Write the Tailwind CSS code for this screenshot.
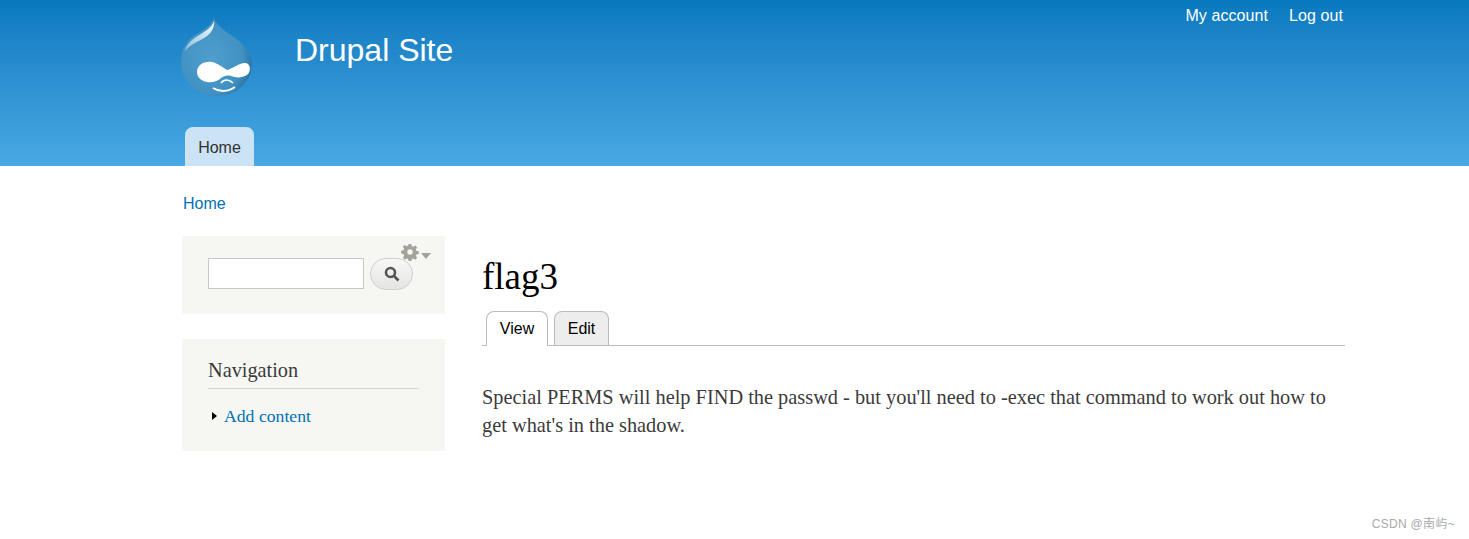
<!DOCTYPE html>
<html lang="en">
<head>
  <meta charset="UTF-8">
  <title>flag3 | Drupal Site</title>
  <script src="https://cdn.jsdelivr.net/npm/@tailwindcss/browser@4"></script>
</head>
<body class="relative min-h-[539px] bg-white font-['Liberation_Sans',sans-serif] text-[#3b3b3b] overflow-hidden">
  <header class="h-[166px] bg-gradient-to-b from-[#0779bf] to-[#48a9e4] flex flex-col">
    <div class="h-[127px] w-[1163px] ml-[182px] flex justify-between">
      <div class="flex items-start">
        <svg class="mt-[16px] -ml-[2px]" width="73" height="82" viewBox="0 0 73 82">
          <defs>
            <radialGradient id="drop" cx="42%" cy="52%" r="60%">
              <stop offset="0" stop-color="#4f9ecd"/>
              <stop offset="0.74" stop-color="#4192c3"/>
              <stop offset="1" stop-color="#2a75a5"/>
            </radialGradient>
            <linearGradient id="shine" x1="1" y1="0" x2="0" y2="1">
              <stop offset="0" stop-color="#fff" stop-opacity="0.95"/>
              <stop offset="1" stop-color="#fff" stop-opacity="0.4"/>
            </linearGradient>
          </defs>
          <path d="M34 1C36 9 46 16 54 21C64 28 72 38 72 47C72 66 56 80 37 80C16 80 1 65 1 45C1 33 7 24 15 19C24 14 32 9 34 1Z" fill="url(#drop)"/>
          <path d="M34 5C32 12 24 16 16 21C10 25 6 30 5 35C10 29 17 26 24 22C30 19 35 12 34 5Z" fill="url(#shine)"/>
          <path d="M17 56C17 49 24 45 32 46C38 47 43 52 47 54C52 53 60 46 66 47C71 48 71 56 67 59C62 62 56 62 51 60C47 59 44 60 41 62C37 66 31 67 27 66C21 65 17 61 17 56Z" fill="#fff"/>
          <path d="M41 67C44 63 49 63 53 67" fill="none" stroke="#fff" stroke-width="1.6"/>
          <path d="M33 72C39 76 48 76 55 71" fill="none" stroke="#fff" stroke-width="2"/>
        </svg>
        <div class="ml-[42px] mt-[31px] text-[32px] leading-[38px] text-white">Drupal Site</div>
      </div>
      <div class="flex gap-[21px] mt-[7px] mr-[2px] text-base leading-[18px] text-white tracking-[0.08px]">
        <a href="#">My account</a>
        <a href="#">Log out</a>
      </div>
    </div>
    <nav class="ml-[185px] w-[69px] h-[39px] pt-[2px] rounded-t-[8px] bg-[#cbe3f5] text-[#333] text-base flex items-center justify-center">Home</nav>
  </header>

  <div class="w-[1163px] ml-[182px]">
    <div class="pt-[29px] pl-[1px] text-base leading-[18px] text-[#0071b3]">Home</div>
    <div class="flex mt-[23px]">
      <aside class="w-[263px] shrink-0 font-['Liberation_Serif',serif]">
        <div class="relative h-[78px] bg-[#f6f6f2] pt-[22px] pl-[26px] flex items-start gap-[6px]">
          <input type="text" class="w-[156px] h-[31px] bg-white border border-[#c8c8c8]">
          <button class="w-[43px] h-[32px] rounded-[16px] border border-[#d0d0d0] bg-gradient-to-b from-[#f8f8f6] to-[#e4e4e2] flex items-center justify-center">
            <svg width="16" height="16" viewBox="0 0 16 16" fill="none" stroke="#555" stroke-width="2.6"><circle cx="6.5" cy="6.5" r="4.5"/><path d="M10 10l4.5 4.5"/></svg>
          </button>
          <div class="absolute left-[219px] top-[7px] flex items-start gap-[2px]">
            <svg width="18" height="18" viewBox="-1 -1 20 20"><path d="M7.5 0h3l.5 2.6 1.6.7 2.2-1.5 2.1 2.1-1.5 2.2.7 1.6 2.6.5v3l-2.6.5-.7 1.6 1.5 2.2-2.1 2.1-2.2-1.5-1.6.7-.5 2.6h-3l-.5-2.6-1.6-.7-2.2 1.5-2.1-2.1 1.5-2.2-.7-1.6L-.8 10.5v-3l2.6-.5.7-1.6-1.5-2.2 2.1-2.1 2.2 1.5 1.6-.7z" fill="#a3a39b"/><circle cx="9" cy="9" r="3" fill="#f6f6f2"/></svg>
            <span class="w-0 h-0 mt-[10px] border-x-[5px] border-x-transparent border-t-[6px] border-t-[#a3a39b]"></span>
          </div>
        </div>
        <div class="mt-[25px] h-[112px] bg-[#f6f6f2] pt-[20px] px-[26px]">
          <h2 class="text-[20.3px] leading-[23px] text-[#3b3b3b] pb-[6px] border-b border-[#d6d6d0] w-[211px]">Navigation</h2>
          <div class="flex items-center mt-[17px] text-[17.7px] leading-[20px] text-[#0071b3]">
            <span class="w-0 h-0 ml-[4px] mr-[7px] border-y-[4px] border-y-transparent border-l-[5px] border-l-black"></span>
            <a href="#">Add content</a>
          </div>
        </div>
      </aside>
      <main class="ml-[37px] flex-1">
        <h1 class="mt-[20px] font-['Liberation_Serif',serif] text-[37px] leading-[42px] text-black">flag3</h1>
        <div class="mt-[13px] h-[35px] border-b border-[#bbb] flex items-end gap-[6px] pl-[4px] text-base">
          <a href="#" class="w-[62px] h-[35px] rounded-t-[8px] border border-b-0 border-[#bbb] bg-white text-black flex items-center justify-center -mb-px">View</a>
          <a href="#" class="w-[55px] h-[34px] rounded-t-[8px] border border-b-0 border-[#bbb] bg-[#ededed] text-black flex items-center justify-center">Edit</a>
        </div>
        <p class="mt-[37px] font-['Liberation_Serif',serif] text-[20.35px] leading-[28px] text-[#3b3b3b]">Special PERMS will help FIND the passwd - but you'll need to -exec that command to work out how to get what's in the shadow.</p>
      </main>
    </div>
  </div>

  <div class="absolute right-[14px] top-[516px] text-xs leading-[16px] tracking-[0.3px] text-[#aaa] font-['Liberation_Sans','Noto_Sans_CJK_SC',sans-serif]">CSDN @南屿~</div>
</body>
</html>
